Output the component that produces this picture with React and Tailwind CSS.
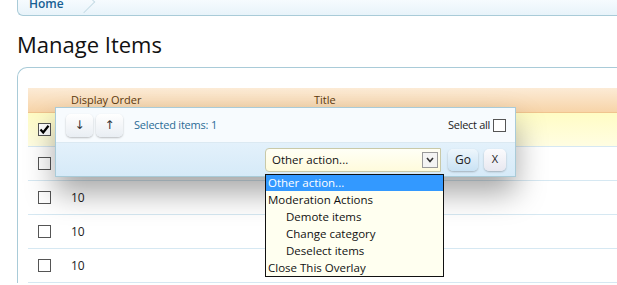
import React from "react";

const font = { fontFamily: '"Open Sans", "DejaVu Sans", sans-serif' };

const Checkbox = ({ checked }) => (
  <span className="w-[13px] h-[13px] border border-[#555] bg-white flex items-center justify-center shrink-0">
    {checked && (
      <svg width="11" height="11" viewBox="0 0 11 11">
        <path d="M1.5 5.5 L4.2 8.5 L9.5 1.8" stroke="#000" strokeWidth="2.2" fill="none" />
      </svg>
    )}
  </span>
);

const rows = [{ checked: true, order: "" }, { order: "" }, { order: "10" }, { order: "10" }, { order: "10" }];

const menu = [
  { label: "Other action...", active: true },
  { label: "Moderation Actions" },
  { label: "Demote items", indent: true },
  { label: "Change category", indent: true },
  { label: "Deselect items", indent: true },
  { label: "Close This Overlay" },
];

export default function App() {
  return (
    <div className="relative w-[617px] h-[285px] overflow-hidden bg-white text-[11px]" style={font}>
      {/* Breadcrumb */}
      <div className="ml-[17px] h-[16px] border-l border-b border-[#a9cbd8] rounded-bl-[6px] bg-gradient-to-b from-[#f6fbfe] to-[#e8f3fa] flex items-start overflow-hidden">
        <span className="ml-[11px] -mt-[5px] text-[12px] font-semibold text-[#176093]">Home</span>
        <span className="ml-[12px] -mt-[6px] w-[16px] h-[16px] border-t border-r border-[#c8dde6] rotate-45 shrink-0"></span>
      </div>

      {/* Title */}
      <h1 className="ml-[17px] mt-[14px] text-[22px] leading-[28px] text-[#111]">Manage Items</h1>

      {/* Content box */}
      <div className="ml-[17px] mt-[9px] border-l border-t border-[#a9cbd8] rounded-tl-[10px] pt-[20px] pl-[10px]">
        <div className="h-[25px] flex items-center bg-gradient-to-b from-[#fcebd6] to-[#f7d4a8] border-b border-[#f0c48e] text-[#5e3a0c]">
          <span className="ml-[43px] w-[243px]">Display Order</span>
          <span>Title</span>
        </div>
        {rows.map((r, i) => (
          <div
            key={i}
            className={`h-[34px] flex items-center border-b border-[#d6e8f2] ${
              r.checked ? "bg-gradient-to-b from-[#fffcc4] to-[#fffde2]" : "bg-white"
            }`}
          >
            <span className="ml-[10px] w-[33px]">
              <Checkbox checked={r.checked} />
            </span>
            <span className="text-[12px] text-[#222]">{r.order}</span>
          </div>
        ))}
      </div>

      {/* Inline moderation overlay */}
      <div className="absolute left-[55px] top-[107px] w-[461px] h-[70px] border border-[#a9cbd8] shadow-[0_16px_30px_rgba(0,0,0,0.35)] flex flex-col">
        <div className="h-[35px] flex items-center bg-[#f7fbfe] border-b border-[#dbe9f2] pl-[10px] pr-[9px]">
          <button className="w-[27px] h-[23px] rounded-[5px] bg-gradient-to-b from-[#ffffff] to-[#e9eef3] shadow-[0_1px_2px_rgba(0,0,0,0.25)] text-[12px] text-[#333] flex items-center justify-center">↓</button>
          <button className="ml-[3px] w-[27px] h-[23px] rounded-[5px] bg-gradient-to-b from-[#ffffff] to-[#e9eef3] shadow-[0_1px_2px_rgba(0,0,0,0.25)] text-[12px] text-[#333] flex items-center justify-center">↑</button>
          <span className="ml-[11px] text-[#2b6b96] tracking-[-0.2px]">Selected items: 1</span>
          <span className="ml-auto text-[#222] tracking-[-0.3px] mr-[3px]">Select all</span>
          <Checkbox />
        </div>
        <div className="flex-1 flex items-center bg-gradient-to-b from-[#e3f1fb] to-[#d6eaf8] pl-[209px]">
          <div className="w-[176px] h-[24px] rounded-l-[4px] border border-[#c9c9a8] bg-gradient-to-b from-[#fffff6] to-[#fffbdc] flex items-center pl-[6px] text-[11.5px] text-[#111]">
            <span className="flex-1">Other action...</span>
            <span className="w-[16px] h-[16px] mr-[2px] border border-[#9a9a9a] bg-[#f4f4f4] flex items-center justify-center">
              <svg width="8" height="6" viewBox="0 0 8 6">
                <path d="M1 1 L4 4.5 L7 1" stroke="#333" strokeWidth="1.6" fill="none" />
              </svg>
            </span>
          </div>
          <button className="ml-[7px] w-[30px] h-[22px] rounded-[5px] bg-gradient-to-b from-[#eef6fc] to-[#c9e2f4] shadow-[0_1px_2px_rgba(0,0,0,0.25)] text-[12px] text-[#222]">Go</button>
          <button className="ml-[6px] w-[22px] h-[22px] rounded-[5px] bg-gradient-to-b from-[#fbfbfd] to-[#e8e8f0] shadow-[0_1px_2px_rgba(0,0,0,0.25)] text-[11px] text-[#222]">X</button>
        </div>
      </div>

      {/* Open dropdown list */}
      <div className="absolute left-[265px] top-[174px] w-[179px] border border-[#111] bg-[#fffff0] text-[11.5px] text-[#111]">
        {menu.map((m) => (
          <div
            key={m.label}
            className={`${m.active ? "h-[16px] leading-[16px]" : "h-[17px] leading-[17px]"} ${
              m.indent ? "pl-[20px]" : "pl-[2px]"
            } ${m.active ? "bg-[#3399ff] text-white" : ""}`}
          >
            {m.label}
          </div>
        ))}
      </div>
    </div>
  );
}
